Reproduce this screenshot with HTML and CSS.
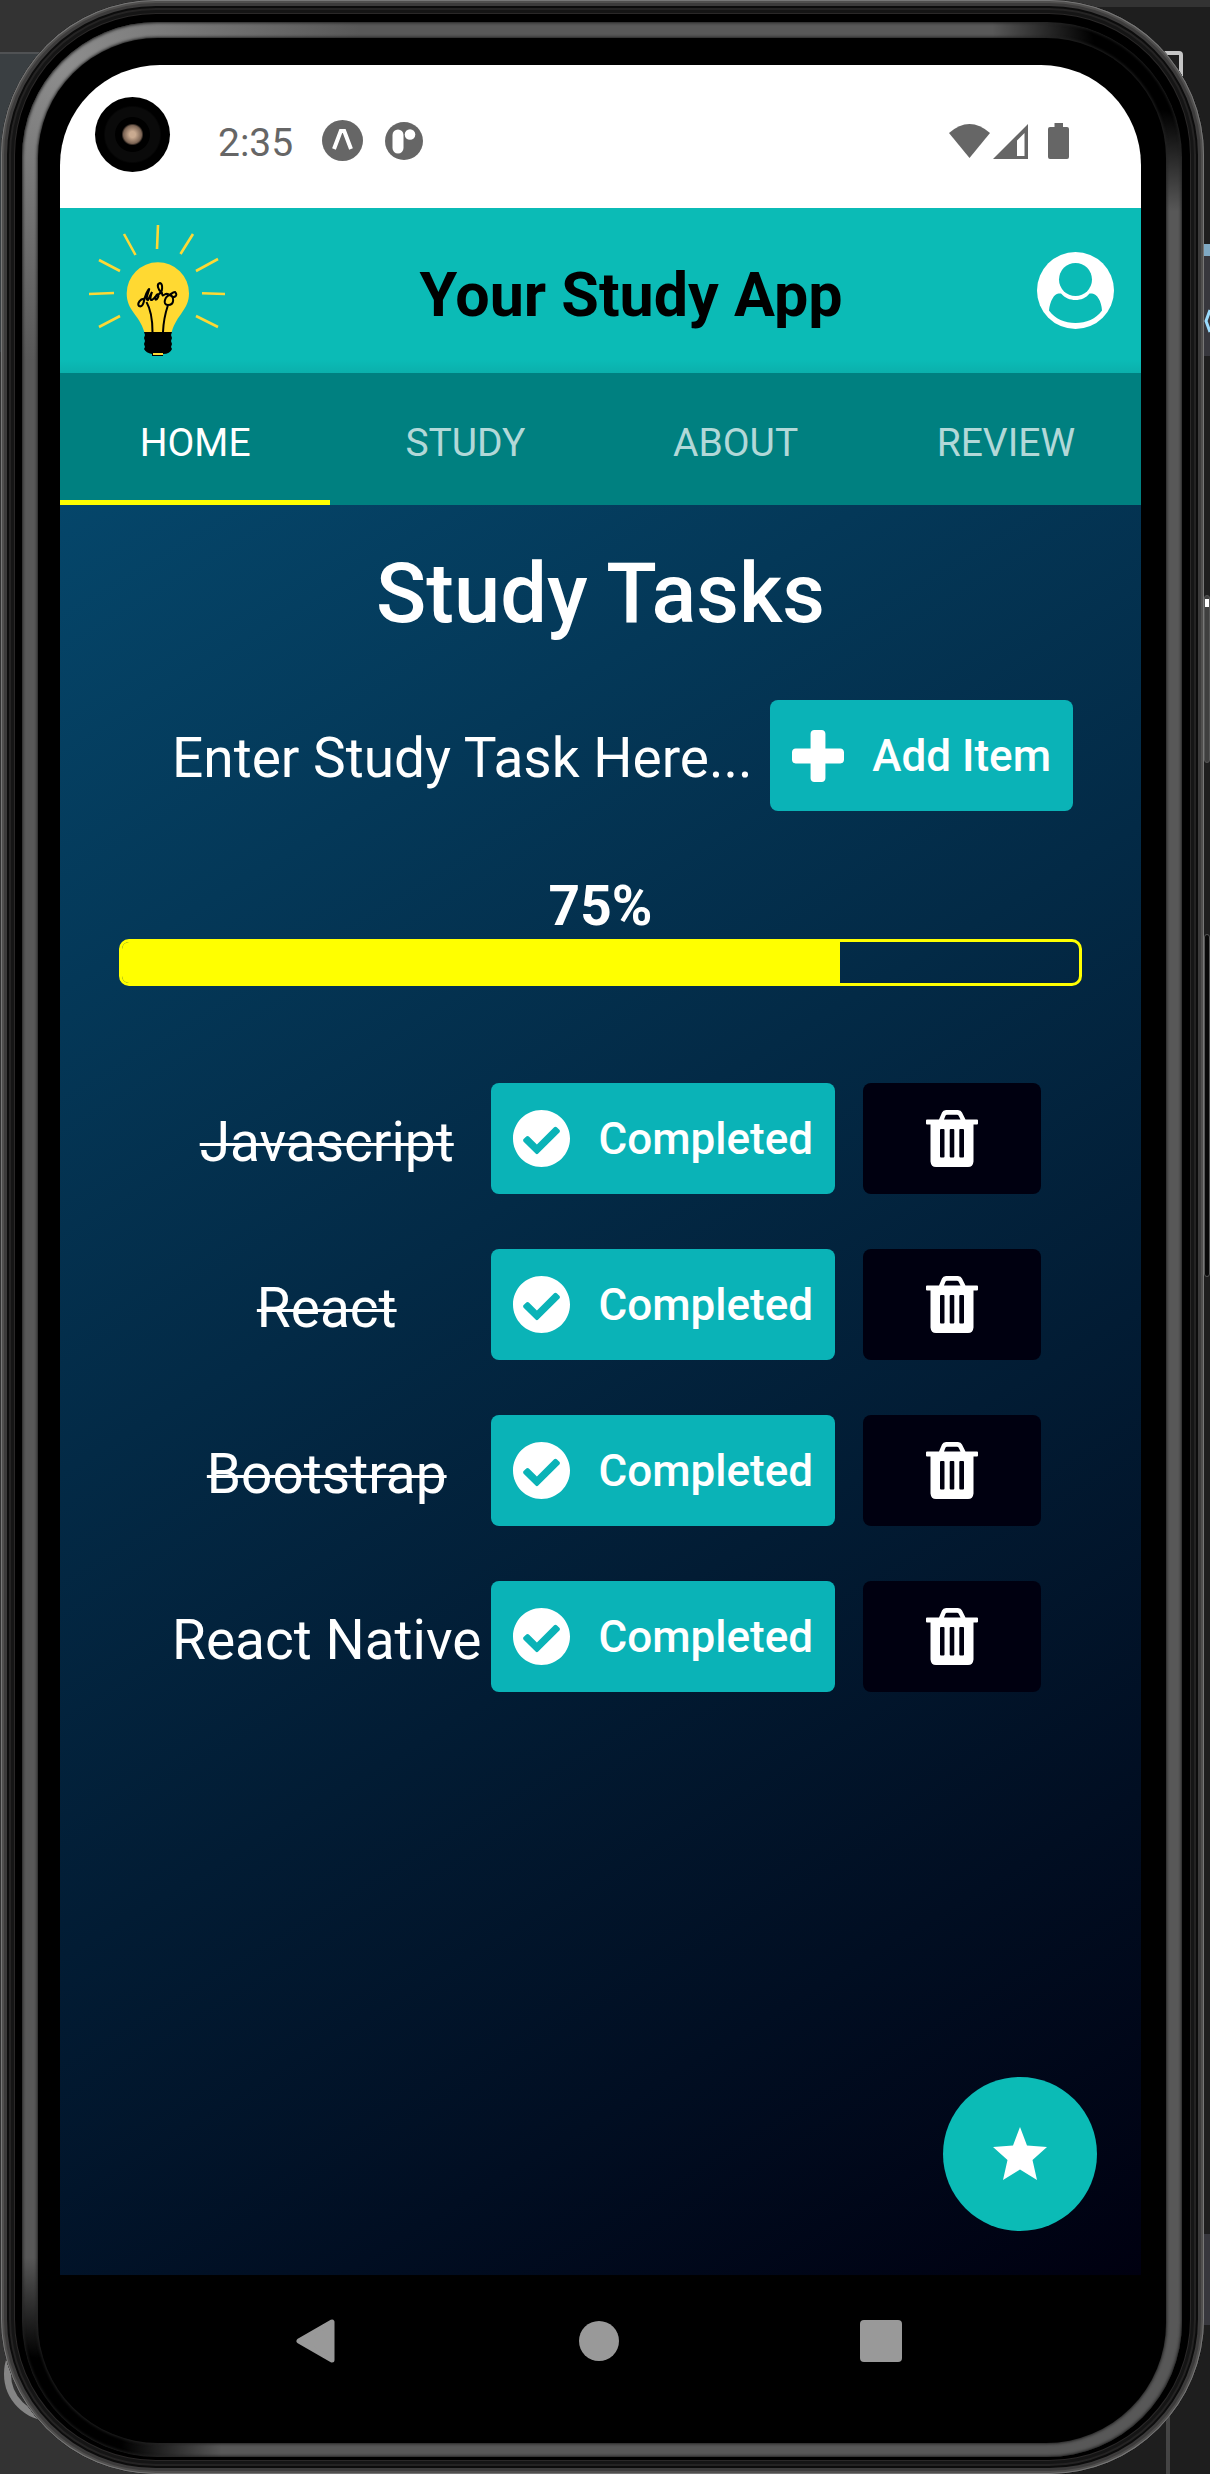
FILE: index.html
```html
<!DOCTYPE html>
<html lang="en">
<head>
<meta charset="utf-8">
<meta name="viewport" content="width=device-width, initial-scale=1">
<title>Your Study App</title>
<link rel="stylesheet" href="styles.css">
</head>
<body>
<svg class="symbols" aria-hidden="true">
  <symbol id="check" viewBox="8 8 496 496"><path d="M504 256c0 136.967-111.033 248-248 248S8 392.967 8 256 119.033 8 256 8s248 111.033 248 248zM227.314 387.314l184-184c6.248-6.248 6.248-16.379 0-22.627l-22.627-22.627c-6.248-6.249-16.379-6.249-22.628 0L216 308.118l-70.059-70.059c-6.248-6.248-16.379-6.248-22.628 0l-22.627 22.627c-6.248 6.248-6.248 16.379 0 22.627l104 104c6.249 6.249 16.379 6.249 22.628.001z"/></symbol>
  <symbol id="trash" viewBox="0 0 52 57"><path fill-rule="evenodd" d="M1 9.500H13L16 2.500Q17 0 20 0H32Q35 0 36 2.500L39.500 9.500H51Q52 9.500 52 10.500V13.500Q52 14.500 51 14.500H47.500V51.500Q47 57 42 57H10Q5 57 4.500 51.500V14.500H1Q0 14.500 0 13.500V10.500Q0 9.500 1 9.500ZM18 9.500H34.500L32.500 5.500Q32 4.700 31 4.700H21Q20 4.700 19.600 5.500ZM14 20V46.500Q14 47.500 15 47.500H17.500Q18.500 47.500 18.500 46.500V20Q18.500 19 17.500 19H15Q14 19 14 20ZM23.700 20V46.500Q23.700 47.500 24.700 47.500H27.300Q28.300 47.500 28.300 46.500V20Q28.300 19 27.300 19H24.700Q23.700 19 23.700 20ZM33.300 20V46.500Q33.300 47.500 34.300 47.500H37Q38 47.500 38 46.500V20Q38 19 37 19H34.300Q33.300 19 33.300 20Z"/></symbol>
</svg>
<div class="desktop">
  <div class="backdrop" aria-hidden="true">
    <i class="window-corner"></i>
    <i class="pane pane-left"></i>
    <i class="pane pane-top"></i>
    <i class="pane pane-link"></i>
    <i class="pane pane-low"></i>
    <i class="divider"></i>
    <i class="ring"></i>
    <svg class="chevron" viewBox="0 0 6 26"><path d="M6 2L2 13L6 24" fill="none" stroke="#9bdcfe" stroke-width="3"/></svg>
  </div>
  <div class="device">
    <span class="side-key side-key-power"></span>
    <span class="side-key side-key-volume"></span>
    <div class="rim">
      <div class="glass">
        <div class="screen">
          <header class="status">
            <span class="camera"></span>
            <span class="clock">2:35</span>
            <svg class="status-app" width="41" height="41" viewBox="0 0 41 41"><circle cx="20.500" cy="20.500" r="20.500" fill="#666"/><path d="M12 29L18.800 11H22.200L29 29" fill="none" stroke="#fff" stroke-width="4"/></svg>
            <svg class="status-app-two" width="38" height="38" viewBox="0 0 38 38"><circle cx="19" cy="19" r="19" fill="#666"/><rect x="7.500" y="7.500" width="11" height="24" rx="5.500" fill="#fff"/><circle cx="25" cy="12.500" r="5.300" fill="#fff"/></svg>
            <svg class="status-signal" width="120" height="36" viewBox="0 0 120 36" fill="#666"><path d="M0 10Q20.500-8 41 10L20.500 35Z"/><path fill-rule="evenodd" d="M44 36L79 1V36ZM68 33H75.500V10L68 17.500Z"/><path d="M101 4H105.500V0H114V4H118Q120 4 120 6V34Q120 36 118 36H101Q99 36 99 34V6Q99 4 101 4Z"/></svg>
          </header>
          <div class="appbar">
            <svg class="logo" width="136" height="131" viewBox="0 0 136 131" role="img" aria-label="Idea bulb">
              <path d="M69 0L68 24M35 9L46.500 30M104 9L91.500 29M10 35L31 46M129 34L107 46M0 69L25 68M113 68.300L136 69M10 102L31 91M107 91L129 102" stroke="#fdd835" stroke-width="2.600" fill="none"/>
              <path d="M68.700 37.300A31 31 0 0 0 37.700 68.300C37.700 86 50 89 55.300 107H82.700C88 89 100 85 100 68.300A31 31 0 0 0 68.700 37.300Z" fill="#ffd932"/>
              <path d="M63.500 107C63.500 94 61.500 84 57.500 77M74 107C74.500 94 77 86 79 80M56 74C51 73 48 79 50 81C54 83 55 76 56 72C58 66 61 62 60 65C59 69 56 75 59 75L63 67C60 76 62 77 66 72C69 69 71 70 68 74C65 77 66 69 70 69C74 67 74 59 71 58C67 59 69 65 73 68C73 74 76 67 79 69C78 73 83 67 86 67C90 71 84 74 81 70C76 71 73 80 79 80C86 80 85 72 81 69" stroke="#000" stroke-width="2" fill="none"/>
              <path d="M55 107H83L82 110L83 113L82 116L83 119L82 122L83 124Q81 129 74 129V131H63V129Q57 128 55 124L56 122L55 119L56 116L55 113L56 110Z"/>
              <path d="M64 129H74" stroke="#ffd932" stroke-width="2"/>
            </svg>
            <h2 class="brand">Your Study App</h2>
            <button class="profile" aria-label="Profile"><svg width="77" height="77" viewBox="0 0 77 77"><circle cx="38.500" cy="38.500" r="38.500" fill="#fff"/><g fill="#0bbbb6"><circle cx="38.500" cy="27.500" r="16.500"/><path d="M12 58.500C13 49 17 42 21.500 41.500H24C28 46 33 48 38.500 48S49 46 52.500 41.500H55C60 42 64.500 49 65 58.500C59 67 49 71 38.500 71S18 67 12 58.500Z"/></g></svg></button>
          </div>
          <nav class="tabs">
            <a class="tab tab-active" href="#home">HOME</a>
            <a class="tab" href="#study">STUDY</a>
            <a class="tab" href="#about">ABOUT</a>
            <a class="tab" href="#review">REVIEW</a>
          </nav>
          <main class="content">
            <h1 class="heading">Study Tasks</h1>
            <form class="entry">
              <input class="entry-field" type="text" aria-label="Study task" placeholder="Enter Study Task Here...">
              <button class="action" type="button"><svg width="52" height="52" viewBox="0 32 448 448"><path fill="currentColor" d="M416 192H288V64c0-18-14-32-32-32h-64c-18 0-32 14-32 32v128H32c-18 0-32 14-32 32v64c0 18 14 32 32 32h128v128c0 18 14 32 32 32h64c18 0 32-14 32-32V320h128c18 0 32-14 32-32v-64c0-18-14-32-32-32z"/></svg><span>Add Item</span></button>
            </form>
            <p class="percent" id="percent">75%</p>
            <div class="meter" role="progressbar" aria-labelledby="percent" aria-valuenow="75" aria-valuemin="0" aria-valuemax="100"><div class="meter-fill" style="width:75%"></div></div>
            <ul class="tasks">
              <li class="task"><span class="task-name task-done">Javascript</span><button class="action"><svg width="57" height="57" fill="#fff"><use href="#check"/></svg><span>Completed</span></button><button class="remove" aria-label="Delete Javascript"><svg width="52" height="57" fill="#fff"><use href="#trash"/></svg></button></li>
              <li class="task"><span class="task-name task-done">React</span><button class="action"><svg width="57" height="57" fill="#fff"><use href="#check"/></svg><span>Completed</span></button><button class="remove" aria-label="Delete React"><svg width="52" height="57" fill="#fff"><use href="#trash"/></svg></button></li>
              <li class="task"><span class="task-name task-done">Bootstrap</span><button class="action"><svg width="57" height="57" fill="#fff"><use href="#check"/></svg><span>Completed</span></button><button class="remove" aria-label="Delete Bootstrap"><svg width="52" height="57" fill="#fff"><use href="#trash"/></svg></button></li>
              <li class="task"><span class="task-name">React Native</span><button class="action"><svg width="57" height="57" fill="#fff"><use href="#check"/></svg><span>Completed</span></button><button class="remove" aria-label="Delete React Native"><svg width="52" height="57" fill="#fff"><use href="#trash"/></svg></button></li>
            </ul>
            <button class="fab" aria-label="Favourites"><svg width="56" height="54" viewBox="0 0 56 54"><path fill="#fff" d="M28 0L35 18.500L55 20L40.500 33L45 53L28 42.500L11 53L15.500 33L1 20L21 18.500Z"/></svg></button>
          </main>
        </div>
        <nav class="system">
          <button class="system-key" aria-label="Back"><svg width="44" height="46" viewBox="0 0 44 46"><path d="M5 23L38 4V42Z" fill="#999" stroke="#999" stroke-width="5" stroke-linejoin="round"/></svg></button>
          <button class="system-key" aria-label="Home"><svg width="40" height="40" viewBox="0 0 40 40"><circle cx="20" cy="20" r="20" fill="#999"/></svg></button>
          <button class="system-key" aria-label="Recent apps"><svg width="42" height="42" viewBox="0 0 42 42"><rect width="42" height="42" rx="4" fill="#999"/></svg></button>
        </nav>
      </div>
    </div>
  </div>
</div>
</body>
</html>
```
FILE: styles.css
```css
* { box-sizing: border-box; }

body {
  margin: 0;
  font-family: Roboto, "Liberation Sans", sans-serif;
  background: #1e1e1e;
}

h1, h2, p, ul { margin: 0; padding: 0; }

button {
  border: 0;
  padding: 0;
  background: none;
  font: inherit;
  color: inherit;
}

svg { display: block; flex: none; }

.symbols { position: absolute; width: 0; height: 0; }

/* Editor windows behind the emulator */
.desktop {
  position: relative;
  display: flex;
  min-height: 100vh;
  padding: 0 6px 0 1px;
  overflow: hidden;
  background: linear-gradient(90deg, #333 50%, #1e1e1e 50%);
}

.backdrop { position: absolute; inset: 0; }
.backdrop > * { position: absolute; }

.window-corner {
  top: 51px;
  right: 27px;
  width: 60px;
  height: 60px;
  border: 4px solid #c5c5c5;
  border-radius: 4px;
}

.pane-left { top: 52px; left: 0; width: 200px; height: 300px; background: #3a3f42; border-top: 2px solid #505254; }
.pane-top { top: 0; right: 0; width: 400px; height: 7px; background: #333; }
.pane-link { top: 244px; right: 0; width: 12px; height: 112px; background: #37373d; border-top: 12px solid #7fa9c4; }
.pane-low { top: 2234px; right: 0; width: 12px; height: 91px; background: #37373d; }
.divider { bottom: 0; right: 40px; width: 4px; height: 200px; background: #444; }
.ring { bottom: 53px; left: 4px; width: 94px; height: 94px; border: 7px solid #858585; border-radius: 50%; }
.chevron { top: 308px; right: 0; width: 6px; height: 26px; }

/* Phone body */
.device {
  position: relative;
  display: flex;
  flex: 1;
  padding: 22px 22px 17px 21px;
  border-radius: 155px;
  background: #000;
  box-shadow:
    inset 0 0 0 1px #777,
    inset 0 0 0 3px #504f4e,
    inset 0 0 0 6px #3c3b3b,
    inset 0 0 0 8px #0c0c0c,
    inset 0 0 0 10px #242323,
    inset 0 0 0 13px #151515,
    inset 0 0 0 14px #2a2828;
}

.side-key {
  position: absolute;
  left: 100%;
  width: 6px;
  border: 1px solid #555;
  border-radius: 3px;
}

.side-key-power { top: 595px; height: 168px; background: linear-gradient(#fff, #fff) 0 3px / 4px 8px no-repeat #3f3f3f; }
.side-key-volume { top: 934px; height: 343px; background: #080808; }

.rim {
  display: flex;
  flex: 1;
  padding: 16px 16px 14px;
  border-radius: 135px;
  background:
    radial-gradient(circle at 100% 0, #000 90px, transparent 190px),
    radial-gradient(circle at 0 100%, #000 100px, transparent 200px),
    radial-gradient(circle at 40px 40px, #8e8e8e, transparent 300px),
    #585858;
  box-shadow: inset 0 0 3px 1px #222;
}

.glass {
  display: flex;
  flex: 1;
  flex-direction: column;
  padding: 27px 25px 0 22px;
  border-radius: 120px;
  background: #000;
  box-shadow: 0 0 3px 1px #222;
}

.screen {
  display: flex;
  flex: 1;
  flex-direction: column;
  overflow: hidden;
  border-radius: 100px 100px 0 0;
  background: #fff;
}

/* Status bar */
.status {
  display: flex;
  align-items: center;
  height: 143px;
  padding: 0 72px 0 35px;
  color: #666;
}

.camera {
  width: 75px;
  height: 75px;
  margin: 0 48px 4px 0;
  border-radius: 50%;
  background: radial-gradient(circle, #c9aa90 0 3px, #7a6353 9px, #000 11px 17px, #0a0a0a 18px 27px, #000 29px);
}

.clock { font-size: 39px; line-height: 48px; margin: 12px 29px 0 0; }
.status-app { margin-top: 8px; }
.status-app-two { margin: 8px 0 0 22px; }
.status-signal { margin: 8px 0 0 auto; }

/* App bar */
.appbar {
  display: flex;
  align-items: center;
  justify-content: space-between;
  height: 165px;
  padding: 0 27px 0 29px;
  background: linear-gradient(#0bbbb6 152px, #0bb0ac);
}

.brand { flex: 1; margin-top: 8px; text-align: center; font-size: 61px; line-height: 72px; font-weight: 700; color: #000; }

.tabs { display: flex; height: 132px; background: #008080; }

.tab {
  display: flex;
  flex: 1;
  align-items: center;
  justify-content: center;
  padding-top: 12px;
  border-bottom: 5px solid transparent;
  font-size: 39px;
  line-height: 48px;
  color: #b2d8d8;
  text-decoration: none;
}

.tab-active { color: #fff; border-bottom-color: #ff0; }

/* Task screen */
.content {
  position: relative;
  flex: 1;
  padding: 41px 59px 80px;
  color: #fff;
  background: linear-gradient(149deg, #05466a, #000010);
}

.heading { text-align: center; font-size: 83px; line-height: 96px; font-weight: 500; }

.entry { display: flex; align-items: center; margin: 58px 9px 0 53px; }

.entry-field {
  flex: 1;
  width: 0;
  min-width: 0;
  height: 111px;
  padding: 4px 0 0;
  border: 0;
  background: none;
  font: 400 55px/64px Roboto, "Liberation Sans", sans-serif;
  color: #fff;
}

.entry-field::placeholder { color: #fff; opacity: 1; }

.action {
  display: flex;
  align-items: center;
  gap: 28px;
  height: 111px;
  padding: 0 22px;
  border-radius: 8px;
  background: #0ab3b7;
  color: #fff;
  font-size: 44px;
  line-height: 52px;
  font-weight: 500;
}

.percent { margin-top: 63px; text-align: center; font-size: 55px; line-height: 64px; font-weight: 700; }

.meter {
  height: 47px;
  margin-top: 1px;
  border: 3px solid #ff0;
  border-radius: 10px;
  overflow: hidden;
}

.meter-fill { height: 100%; background: #ff0; }

.tasks {
  display: flex;
  flex-direction: column;
  gap: 55px;
  margin: 97px 41px 0 43px;
  list-style: none;
}

.task { display: flex; align-items: center; }
.task-name { flex: 1; padding-top: 6px; text-align: center; font-size: 55px; line-height: 64px; }
.task-done { text-decoration: line-through 3px; }

.remove {
  display: flex;
  align-items: center;
  justify-content: center;
  width: 178px;
  height: 111px;
  margin-left: 28px;
  border-radius: 8px;
  background: #000010;
}

.fab {
  position: absolute;
  right: 44px;
  bottom: 44px;
  display: flex;
  align-items: center;
  justify-content: center;
  width: 154px;
  height: 154px;
  border-radius: 50%;
  background: #0bbbb6;
}

/* Android navigation */
.system {
  display: flex;
  align-items: center;
  justify-content: space-between;
  height: 168px;
  padding: 0 239px 36px 234px;
}
```
